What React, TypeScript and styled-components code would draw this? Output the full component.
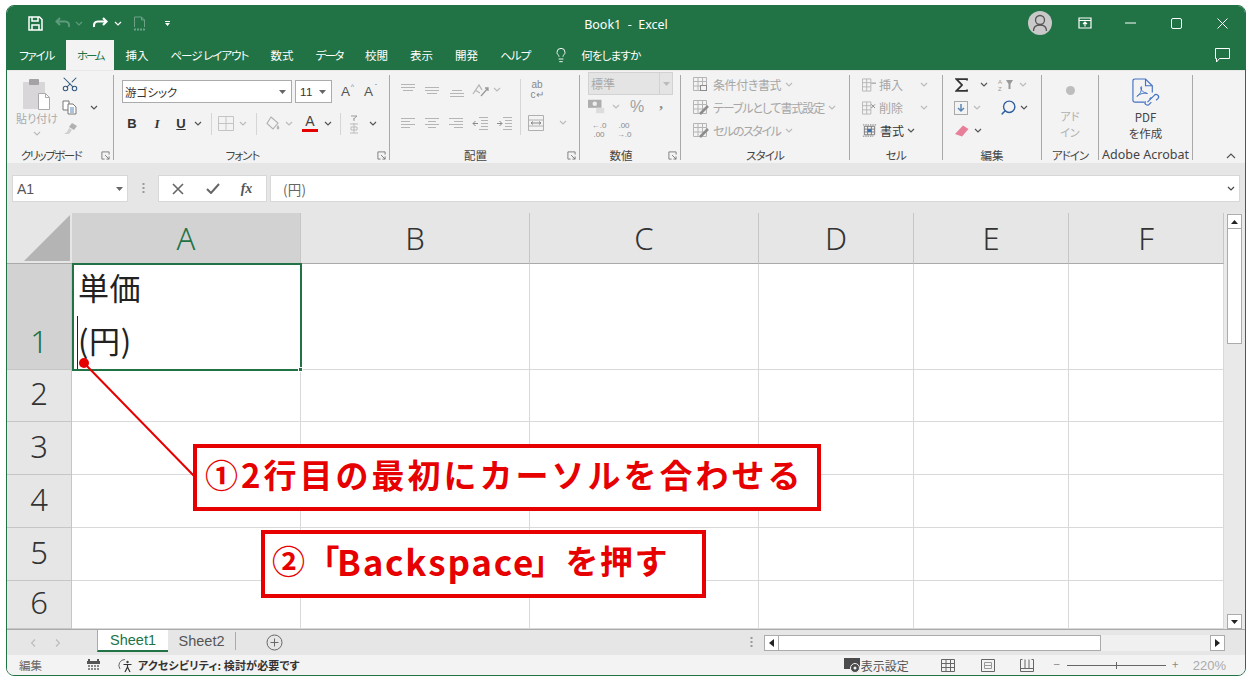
import React from "react";
import styled, { createGlobalStyle } from "styled-components";
import { Lightbulb, Scissors, Search } from "lucide-react";

const Global = createGlobalStyle`
  html, body { margin: 0; padding: 0; background: #fff; }
  body { font-family: "Noto Sans CJK JP", "Noto Sans", sans-serif; font-feature-settings: "palt"; }
  * { box-sizing: border-box; }
`;

const GREEN = "#217346";
const RED = "#e60000";

const Page = styled.div`position: relative; width: 1252px; height: 683px; padding: 5px 6px 0; overflow: hidden;`;
const Window = styled.div`width: 1240px; height: 671px; border: 1px solid ${GREEN}; border-radius: 8px; overflow: hidden; display: flex; flex-direction: column; background: #e6e6e6;`;

const TitleBar = styled.div`height: 34px; flex: none; background: ${GREEN}; display: flex; align-items: center; color: #fff;`;
const TitleSide = styled.div<{ $end?: boolean }>`flex: 1 1 0; display: flex; align-items: center; justify-content: ${(p) => (p.$end ? "flex-end" : "flex-start")};`;
const TitleText = styled.div`font-size: 12.5px; white-space: pre; font-family: "Noto Sans", sans-serif; margin-top: 2px;`;
const Slot = styled.span<{ $w: number }>`flex: none; width: ${(p) => p.$w}px; display: inline-flex; align-items: center; justify-content: center; line-height: 1;`;
const Avatar = styled.span`width: 24px; height: 24px; border-radius: 50%; background: #c9c9c9; display: flex; align-items: center; justify-content: center;`;

const TabsBar = styled.div`height: 30px; flex: none; background: ${GREEN}; display: flex; align-items: stretch; padding-right: 15px;`;
const Tab = styled.div<{ $active?: boolean; $pad?: number; $ls?: number }>`padding: 0 ${(p) => p.$pad ?? 11.05}px; display: flex; align-items: center; font-size: 11.5px; white-space: pre; letter-spacing: ${(p) => p.$ls ?? 0}px; color: ${(p) => (p.$active ? GREEN : "#fff")}; background: ${(p) => (p.$active ? "#f3f3f3" : "transparent")};`;
const TellMe = styled.div`display: flex; align-items: center; gap: 12px; padding-left: 12px; color: #fff; font-size: 11.5px; letter-spacing: -0.8px; flex: 1;`;

const Ribbon = styled.div`height: 93px; flex: none; background: #f3f3f3; display: flex; padding-top: 4px; border-top: 1px solid #e8e8e8;`;
const Group = styled.div<{ $w: number }>`position: relative; flex: none; width: ${(p) => p.$w}px; height: 85px; border-right: 1px solid #a9a9a9; display: flex; flex-direction: column;`;
const GroupBody = styled.div<{ $pl?: number; $pt?: number; $mt?: number }>`flex: 1; min-height: 0; margin-top: ${(p) => p.$mt ?? 0}px; padding: ${(p) => p.$pt ?? 0}px 0 0 ${(p) => p.$pl ?? 0}px;`;
const Footer = styled.div`height: 15px; flex: none; margin-bottom: -3px; display: flex; align-items: center; font-size: 11.5px; color: #444; line-height: 1;`;
const FooterLabel = styled.span<{ $ls?: number }>`flex: 1; text-align: center; white-space: nowrap; letter-spacing: ${(p) => p.$ls ?? 0}px;`;
const AcrobatLabel = styled(FooterLabel)`font-family: "Noto Sans", sans-serif; font-size: 12.5px;`;
const Launcher = styled.span`flex: none; width: 18px; display: flex; align-items: center; padding-left: 6px;`;
const Stack = styled.div<{ $gap?: number }>`display: flex; flex-direction: column; gap: ${(p) => p.$gap ?? 0}px;`;
const Row = styled.div<{ $h?: number; $ml?: number }>`display: flex; align-items: center; height: ${(p) => p.$h ?? 23}px; margin-left: ${(p) => p.$ml ?? 0}px;`;
const Split = styled.div`display: flex; align-items: flex-start;`;
const Divider = styled.span<{ $h: number; $ml?: number; $mt?: number }>`flex: none; width: 1px; height: ${(p) => p.$h}px; background: #d6d6d6; margin-left: ${(p) => p.$ml ?? 0}px; margin-top: ${(p) => p.$mt ?? 0}px;`;
const VDiv = styled.span`display: block; width: 1px; height: 22px; background: #d6d6d6;`;

const PasteCol = styled.div`flex: none; width: 42px; display: flex; flex-direction: column; align-items: center; padding-top: 3px; color: #aaa; font-size: 11px; svg { display: block; }`;
const PasteLabel = styled.span`line-height: 13px; white-space: nowrap; margin-top: 1px;`;
const ChevWrap = styled.span`margin-top: 6px; display: flex;`;
const ClipCol = styled.div`flex: none; width: 24px; display: flex; flex-direction: column; align-items: center; gap: 7px; svg { display: block; }`;
const ClipChevron = styled(Slot)`margin-top: 30px;`;
const CutIcon = styled(Scissors)`transform: rotate(-90deg);`;

const Select = styled.div<{ $w: number; $ml?: number }>`flex: none; width: ${(p) => p.$w}px; height: 23px; margin-left: ${(p) => p.$ml ?? 0}px; background: #fff; border: 1px solid #ababab; display: flex; align-items: center; justify-content: space-between; padding: 0 5px 0 2px; font-size: 11.5px; color: #333;`;
const SizeText = styled.span`font-family: "Liberation Sans", sans-serif; letter-spacing: .5px; padding-left: 2px;`;
const FormatBtn = styled.span<{ $s?: string; $u?: boolean }>`font-family: "Liberation Serif", serif; font-weight: 700; font-size: 13px; color: #333; font-style: ${(p) => p.$s ?? "normal"}; text-decoration: ${(p) => (p.$u ? "underline" : "none")};`;
const SansBtn = styled(FormatBtn)`font-family: "Liberation Sans", sans-serif;`;
const FontA = styled.span`display: flex; flex-direction: column; align-items: center; font-family: "Liberation Sans", sans-serif; font-size: 14px; color: #444; line-height: 13px;`;
const RedBar = styled.span`display: block; width: 16px; height: 3px; background: ${RED}; margin-top: 1px;`;
const GrowA = styled.span`font-family: "Liberation Sans", sans-serif; font-size: 13.5px; color: #555; position: relative; padding-right: 4px;`;
const Sup = styled.span`position: absolute; top: -2px; right: 0; font-size: 7px; color: #5b87b8;`;
const GrowSlot = styled(Slot)<{ $ml?: number }>`margin-left: ${(p) => p.$ml ?? 0}px;`;

const NumSelect = styled.div`width: 85px; height: 23px; margin: -3px 0 0 8px; background: #e4e4e4; border: 1px solid #d2d2d2; display: flex; color: #a9a9a9; font-size: 12px; align-items: center; padding-left: 2px;`;
const NumCaret = styled.span`margin-left: auto; width: 13px; height: 21px; border-left: 1px solid #d2d2d2; display: flex; align-items: center; justify-content: center;`;
const Pct = styled.span`font-size: 16px; color: #a0a0a0; font-family: "Liberation Sans", sans-serif;`;
const Comma = styled.span`font-size: 15px; font-weight: 700; color: #888; font-family: "Liberation Serif", serif; margin-top: -6px;`;
const DecText = styled.span`font-family: "Liberation Sans", sans-serif; font-size: 8px; color: #8a8a8a; line-height: 9px; text-align: center; white-space: pre;`;
const WrapText = styled.span`font-family: "Liberation Sans", sans-serif; font-size: 10px; line-height: 10px; color: #888; text-align: center; white-space: pre;`;

const ListRow = styled.div<{ $gap?: number }>`height: 23px; display: flex; align-items: center; gap: ${(p) => p.$gap ?? 4}px; font-size: 12px; color: #a6a6a6; white-space: nowrap;`;
const DarkRow = styled(ListRow)`color: #333;`;
const ListText = styled.span<{ $ls?: number }>`letter-spacing: ${(p) => p.$ls ?? 0}px;`;
const Center = styled.div`display: flex; flex-direction: column; align-items: center; font-size: 11px; line-height: 16px; text-align: center;`;
const Muted = styled(Center)`color: #b0b0b0;`;
const Strong = styled(Center)`color: #444; font-size: 11.5px; svg { display: block; margin-bottom: 1px; }`;
const Dot = styled.span`width: 9px; height: 9px; border-radius: 50%; background: #bdbdbd; margin: 11px 0 13px;`;
const RibbonEnd = styled.div`flex: 1; display: flex; align-items: flex-end; justify-content: flex-end; padding: 0 9px 4px 0;`;

const FormulaBand = styled.div`height: 50px; flex: none; background: #e6e6e6; padding: 12px 5px 11px 5px; display: flex; gap: 3px; align-items: stretch;`;
const Box = styled.div<{ $w?: number }>`background: #fff; border: 1px solid #d8d8d8; height: 27px; display: flex; align-items: center; ${(p) => (p.$w ? `width:${p.$w}px; flex:none;` : "flex:1;")}`;
const NameText = styled.span`font-family: "Liberation Sans", sans-serif; font-size: 14px; color: #555; padding-left: 4px; flex: 1;`;
const FormulaText = styled.span`font-size: 13.5px; color: #666; padding-left: 12px; flex: 1; letter-spacing: .2px; font-feature-settings: normal;`;
const Grip = styled.span`width: 24px; flex: none; display: flex; align-items: center; justify-content: center;`;
const Fx = styled.span`font-family: "Liberation Serif", serif; font-style: italic; font-size: 14px; color: #555; font-weight: 700;`;

const Sheet = styled.div`height: 416px; flex: none; display: flex; background: #fff;`;
const Grid = styled.div`flex: none; width: 1217px; display: grid; grid-template-columns: 65px 229px 229px 229px 155px 155px 155px; grid-template-rows: 51px 106px 52px 53px 53px 53px 48px; border-right: 1px solid #aaa;`;
const Corner = styled.div`background: #e6e6e6; border-bottom: 1px solid #aaa; display: flex; align-items: flex-end; justify-content: flex-end; padding: 0 2px 2px 0;`;
const ColHead = styled.div<{ $on?: boolean }>`background: ${(p) => (p.$on ? "#d2d2d2" : "#e6e6e6")}; color: ${(p) => (p.$on ? GREEN : "#333")}; border-right: 1px solid #c6c6c6; border-bottom: 1px solid #aaa; display: flex; align-items: center; justify-content: center; font-size: 31px; font-weight: 300; font-family: "Noto Sans", sans-serif;`;
const RowHead = styled.div<{ $on?: boolean }>`background: ${(p) => (p.$on ? "#d2d2d2" : "#e6e6e6")}; color: ${(p) => (p.$on ? GREEN : "#333")}; border-right: 1px solid #c6c6c6; border-bottom: 1px solid #c6c6c6; display: flex; align-items: center; justify-content: center; font-size: 31px; line-height: 1; font-weight: 300; font-family: "Noto Sans", sans-serif; overflow: hidden; padding: ${(p) => (p.$on ? 53 : 0)}px 0 4px;`;
const Cell = styled.div`background: #fff; border-right: 1px solid #d9d9d9; border-bottom: 1px solid #d9d9d9;`;
const ActiveCell = styled.div`position: relative; margin: -1px -1px -1px 0; border: 2px solid ${GREEN}; padding: 0 0 0 4px; background: #fff; font-size: 31px; line-height: 53px; color: #222; z-index: 1; font-feature-settings: normal;`;
const Handle = styled.span`position: absolute; right: -3px; bottom: -3px; width: 5px; height: 5px; background: ${GREEN}; border: 1px solid #fff;`;
const Caret = styled.span`position: absolute; left: 3px; bottom: 0; width: 1px; height: 53px; background: #222;`;
const CellLines = styled.div`margin-top: -5px;`;
const CellLine = styled.div`height: 53px; white-space: pre; letter-spacing: .6px;`;

const VScroll = styled.div`flex: 1; background: #e9e9e9; display: flex; flex-direction: column; padding: 1px 3px 0 3px;`;
const ScrollBtn = styled.div`flex: none; height: 15px; background: #fff; border: 1px solid #ababab; display: flex; align-items: center; justify-content: center;`;
const VThumb = styled.div`flex: none; height: 115px; background: #fff; border: 1px solid #ababab; border-top: 0;`;
const VSpace = styled.div`flex: 1;`;

const SheetBar = styled.div`height: 26px; flex: none; background: #e6e6e6; border-top: 1px solid #aaa; display: flex; align-items: stretch; font-size: 14.5px;`;
const NavArrows = styled.div`flex: none; width: 90px; display: flex; align-items: center; padding-left: 24px; gap: 19px;`;
const SheetTab = styled.div<{ $on?: boolean }>`flex: none; width: ${(p) => (p.$on ? 71 : 67)}px; height: 22px; display: flex; align-items: center; justify-content: center; font-family: "Liberation Sans", sans-serif; background: ${(p) => (p.$on ? "#fff" : "transparent")}; color: ${(p) => (p.$on ? GREEN : "#555")}; border-left: ${(p) => (p.$on ? "1px solid #aaa" : "0")}; border-bottom: ${(p) => (p.$on ? `2px solid ${GREEN}` : "0")};`;
const TabSep = styled.span`flex: none; width: 1px; height: 18px; background: #aaa; margin-top: 2px;`;
const AddSheet = styled.div`flex: none; margin-left: 30px; display: flex; align-items: center;`;
const HArea = styled.div`flex: 1; display: flex; justify-content: flex-end; align-items: center; padding-right: 20px;`;
const HScroll = styled.div`width: 461px; height: 16px; margin-left: 11px; display: flex; background: #f0f0f0;`;
const HBtn = styled.div`flex: none; width: 15px; background: #fff; border: 1px solid #ababab; display: flex; align-items: center; justify-content: center;`;
const HThumb = styled.div`flex: none; width: 322px; background: #fff; border: 1px solid #ababab; border-left: 0;`;
const HSpace = styled.div`flex: 1;`;

const StatusBar = styled.div`height: 20px; flex: none; background: #f3f3f3; display: flex; align-items: center; font-size: 11.5px; color: #666;`;
const StatusLeft = styled.div`flex: 1; display: flex; align-items: center; padding-left: 12px;`;
const StatusStrong = styled.span`color: #333; font-weight: 700; font-size: 11px; letter-spacing: .15px; white-space: nowrap; margin-left: 3px;`;
const StatusText = styled.span`color: #555; font-size: 12px; white-space: nowrap;`;
const CalSlot = styled(Slot)`padding-left: 28px;`;
const ViewSlot = styled(Slot)`padding-left: 19px;`;
const ZoomSign = styled(Slot)`color: #888;`;
const ZoomPct = styled.span`font-family: "Liberation Sans", sans-serif; color: #aaa; font-size: 13px; margin: 0 19px 0 8px;`;
const SliderTrack = styled.span`position: relative; display: block; width: 99px; height: 1px; background: #666;`;
const SliderTick = styled.span`position: absolute; left: 49px; top: -3px; width: 1px; height: 7px; background: #666;`;

const Callout = styled.div<{ $x: number; $y: number; $w: number; $h: number; $fs: number; $ls: number; $pl: number; $pb: number }>`
  position: absolute; left: ${(p) => p.$x}px; top: ${(p) => p.$y}px; width: ${(p) => p.$w}px; height: ${(p) => p.$h}px;
  border: 4px solid ${RED}; background: #fff; color: ${RED}; font-weight: 700; font-size: ${(p) => p.$fs}px;
  letter-spacing: ${(p) => p.$ls}px; padding: 0 0 ${(p) => p.$pb}px ${(p) => p.$pl}px; display: flex; align-items: center; white-space: pre; z-index: 3;
  font-feature-settings: normal;
`;
const Latin = styled.span`font-size: 35px; letter-spacing: 1.8px; margin: 0 -4px;`;
const Pointer = styled.svg`position: absolute; left: 0; top: 0; z-index: 2;`;

const Chev = ({ c = "#555" }: { c?: string }) => (
  <svg width="8" height="5" viewBox="0 0 8 5" fill="none"><path d="M1 1l3 3 3-3" stroke={c} strokeWidth="1.2" /></svg>
);
const Tri = ({ c = "#666", up }: { c?: string; up?: boolean }) => (
  <svg width="7" height="4" viewBox="0 0 7 4"><path d={up ? "M0 4h7L3.5 0z" : "M0 0h7L3.5 4z"} fill={c} /></svg>
);
const Launch = () => (
  <svg width="9" height="9" viewBox="0 0 10 10" fill="none" stroke="#777" strokeWidth="1"><path d="M9 4V1H1v8h3" /><path d="M4.5 4.5L9 9M9 6v3H6" /></svg>
);
const Lines = ({ d, c = "#b5b5b5" }: { d: number[][]; c?: string }) => (
  <svg width="16" height="14" viewBox="0 0 16 14" stroke={c} strokeWidth="1" fill="none">
    {d.map((l, i) => <path key={i} d={`M${l[1]} ${l[0] + 0.5}H${l[2]}`} />)}
  </svg>
);
const ICON_TOP = [[1, 1, 15], [4, 1, 15], [7, 3, 13]];
const ICON_MID = [[4, 1, 15], [7, 1, 15], [10, 3, 13]];
const ICON_BOT = [[7, 3, 13], [10, 1, 15], [13, 1, 15]];
const ICON_L = [[2, 1, 15], [5, 1, 10], [8, 1, 15], [11, 1, 10]];
const ICON_C = [[2, 1, 15], [5, 4, 12], [8, 1, 15], [11, 4, 12]];
const ICON_R = [[2, 1, 15], [5, 6, 15], [8, 1, 15], [11, 6, 15]];

const SaveIcon = () => (
  <svg width="15" height="15" viewBox="0 0 15 15" fill="none" stroke="#fff" strokeWidth="1.5"><path d="M1 1h10.5L14 3.5V14H1z" /><path d="M4 1v4h6V1M4 14V9h7v5" /></svg>
);
const UndoIcon = ({ c }: { c: string }) => (
  <svg width="16" height="12" viewBox="0 0 16 12" fill="none" stroke={c} strokeWidth="2"><path d="M5 1L1.5 4.5 5 8" /><path d="M2 4.5h8c3 0 4.5 2 4 5.5" /></svg>
);
const RedoIcon = () => (
  <svg width="16" height="12" viewBox="0 0 16 12" fill="none" stroke="#fff" strokeWidth="2.2"><path d="M11 1l3.5 3.5L11 8" /><path d="M14 4.5H6C3 4.5 1.5 6.5 2 10" /></svg>
);
const DocIcon = () => (
  <svg width="13" height="15" viewBox="0 0 13 15" fill="none" stroke="#6ea287" strokeWidth="1"><path d="M1.5 11V1h7l3 3v7M8.500 1v3h3" /><path d="M1 13.500h11" strokeDasharray="2 1" strokeWidth="2" /></svg>
);
const CustomizeIcon = () => (
  <svg width="7" height="7" viewBox="0 0 7 7"><path d="M1 1h5v1H1z M1 3h5L3.500 6z" fill="#fff" /></svg>
);
const PersonIcon = () => (
  <svg width="18" height="18" viewBox="0 0 18 18" fill="none" stroke="#555" strokeWidth="1.3"><circle cx="9" cy="6" r="4.500" /><path d="M2.500 17c0-4 2.500-6 6.500-6s6.500 2 6.500 6" /></svg>
);
const RibbonOpt = () => (
  <svg width="14" height="12" viewBox="0 0 14 12" fill="none" stroke="#fff" strokeWidth="1.200"><path d="M1 1h12v10H1zM1 3.500h12" /><path d="M7 9.500V5M5 7l2-2 2 2" /></svg>
);
const WinMin = () => <svg width="11" height="2" viewBox="0 0 11 2"><path d="M0 1h11" stroke="#fff" /></svg>;
const WinMax = () => <svg width="11" height="11" viewBox="0 0 11 11" fill="none" stroke="#fff"><rect x=".5" y=".5" width="10" height="10" rx="1.500" /></svg>;
const WinClose = () => <svg width="11" height="11" viewBox="0 0 11 11" stroke="#fff"><path d="M.5.500l10 10M10.500.500l-10 10" /></svg>;
const CommentIcon = () => (
  <svg width="15" height="15" viewBox="0 0 15 15" fill="none" stroke="#fff"><path d="M.500.500h14v10H4.500L1.500 14v-3.500h-1z" /></svg>
);
const PasteIcon = () => (
  <svg width="28" height="33" viewBox="0 0 28 33"><rect x="0" y="4" width="22" height="27" rx="1" fill="#d9d6d9" /><rect x="6" y="1" width="10" height="6" rx="1" fill="#a5a2a5" /><path d="M15.500 15.500h7l4 4v12h-11z" fill="#fff" stroke="#aaa" /><path d="M22.500 15.500v4h4" fill="none" stroke="#aaa" /></svg>
);
const CopyIcon = () => (
  <svg width="16" height="15" viewBox="0 0 16 15" fill="none" stroke="#777"><path d="M1 1h6v9H1z" fill="#fff" /><path d="M6 4h5l3 3v7H6z" fill="#fff" /><path d="M8 8h4M8 10h4M8 12h4" stroke="#5b87b8" /></svg>
);
const BrushIcon = () => (
  <svg width="15" height="13" viewBox="0 0 15 13"><path d="M9 1l5 3-3 4-5-3z" fill="#b0b0b0" /><path d="M6 6l3 2-3 4-5 0 3-2z" fill="#d0d0d0" /></svg>
);
const BorderIcon = () => (
  <svg width="16" height="15" viewBox="0 0 16 15" fill="none" stroke="#c4c4c4"><path d="M.500.500h15v14H.500zM8 .500v14M.500 7.500h15" /></svg>
);
const FillIcon = () => (
  <svg width="15" height="15" viewBox="0 0 15 15" fill="none" stroke="#b0b0b0" strokeWidth="1.100"><path d="M6 1l7 6-5 6-6-5.500z" /><path d="M13 10c1 1.500 1 3 0 3s-1-1.500 0-3z" /></svg>
);
const RubyIcon = () => (
  <svg width="10" height="20" viewBox="0 0 10 20" fill="none" stroke="#999"><path d="M2 2h6L4.500 5M5 4v3" /><path d="M1 10h8M5 9v10M2 13h6v3H2zM1 19h8" stroke="#bbb" /></svg>
);
const OrientIcon = () => (
  <svg width="20" height="16" viewBox="0 0 20 16" fill="none" stroke="#b5b5b5" strokeWidth="1.300"><path d="M3 12L9 3l3 5M5 8l5 3" /><path d="M11 14L18 6M15 6h3v3" stroke="#999" /></svg>
);
const IndentIcon = ({ rev }: { rev?: boolean }) => (
  <svg width="17" height="14" viewBox="0 0 17 14" fill="none" stroke="#b5b5b5">
    <path d="M7 1.500h9M9 4.500h7M9 7.500h7M9 10.500h7M7 13.500h9" />
    <path d={rev ? "M6 7.500H1M3.500 5l-2.500 2.500L3.500 10" : "M1 7.500h5M3.500 5L6 7.500 3.500 10"} stroke="#8a8a8a" />
  </svg>
);
const MergeIcon = () => (
  <svg width="16" height="16" viewBox="0 0 16 16" fill="none" stroke="#b0b0b0"><path d="M.500.500h15v15H.500zM.500 5h15M.500 11h15" /><path d="M3 8h10M5 6.500L3 8l2 1.500M11 6.500L13 8l-2 1.500" stroke="#888" /></svg>
);
const CurrencyIcon = () => (
  <svg width="20" height="17" viewBox="0 0 20 17"><rect x="0" y="1" width="15" height="9" fill="#aeaeae" /><circle cx="7.500" cy="5.500" r="2.500" fill="#eee" /><path d="M9 10h9v6H9z" fill="#ddd" /></svg>
);
const StyleIcon = ({ pen }: { pen?: boolean }) => (
  <svg width="16" height="16" viewBox="0 0 16 16" fill="none" stroke="#b5b5b5">
    <path d="M.500.500h13v13H.500zM.500 4.500h13M.500 9h13M5 .500v13M9.500 .500v13" />
    {pen ? <path d="M15 6l-8 8" stroke="#8c8c8c" strokeWidth="2.500" /> : <rect x="7.500" y="8.500" width="6" height="5" fill="#f3f3f3" stroke="#8c8c8c" />}
  </svg>
);
const CellInsIcon = ({ x }: { x?: boolean }) => (
  <svg width="15" height="14" viewBox="0 0 15 14" fill="none" stroke="#b5b5b5"><path d="M.500.500h9v13h-9zM.500 4.500h9M.500 9h9M5 .500v13" /><path d={x ? "M10 3l4 4M14 3l-4 4" : "M10 5h5"} stroke="#888" /></svg>
);
const FormatIcon = () => (
  <svg width="15" height="16" viewBox="0 0 16 16" fill="none" stroke="#777"><path d="M1 1.500h14M1 13.500h11" strokeDasharray="1.500 1" /><path d="M2.500 3h11v9h-11zM2.500 6h11M2.500 9h11M6 3v9M10 3v9" /><rect x="6" y="6" width="4" height="3" fill="#3d6fb0" stroke="none" /></svg>
);
const Sigma = () => (
  <svg width="13" height="14" viewBox="0 0 13 14" fill="none" stroke="#333" strokeWidth="1.800"><path d="M12 2.500V1.200H1.500L7 7l-5.500 5.800H12v-1.300" /></svg>
);
const SortIcon = () => (
  <svg width="16" height="14" viewBox="0 0 16 14"><path d="M8 2h7l-2.500 4v5h-2V6z" fill="#999" /><text x="0" y="6" fontSize="6" fill="#999" fontFamily="Liberation Sans">A</text><text x="0" y="13" fontSize="6" fill="#999" fontFamily="Liberation Sans">Z</text></svg>
);
const FillDown = () => (
  <svg width="14" height="14" viewBox="0 0 14 14" fill="none" stroke="#aaa"><rect x=".5" y=".5" width="13" height="13" /><path d="M7 3v7M4 7l3 3 3-3" stroke="#5b87b8" strokeWidth="1.500" /></svg>
);
const Eraser = () => (
  <svg width="15" height="12" viewBox="0 0 15 12"><path d="M9 .500L14.500 4 8 11.500 1 9z" fill="#e77f99" /></svg>
);
const FindIcon = styled(Search)`transform: scaleX(-1);`;
const AcrobatIcon = () => (
  <svg width="30" height="30" viewBox="0 0 31 31" fill="none" stroke="#4472c4" strokeWidth="1.200">
    <path d="M14 25H4a2 2 0 0 1-2-2V3a2 2 0 0 1 2-2h11l7 7v7" /><path d="M15 1v7h7" />
    <path d="M6 19c3-1 5-6 5-9 0-2-1-1-1 0 0 3 3 5 7 6-3-1-8 0-11 3z" strokeWidth="1" />
    <path d="M17 25l7-7a2.500 2.500 0 0 1 4 3l-2 2M21 20l-2 2M15 24a2.500 2.500 0 0 0 4 3l2-2" />
  </svg>
);
const Gripper = () => (
  <svg width="3" height="11" viewBox="0 0 3 11" fill="#999"><rect width="2" height="2" x=".5" /><rect width="2" height="2" x=".5" y="4" /><rect width="2" height="2" x=".5" y="8" /></svg>
);
const XMark = () => <svg width="12" height="12" viewBox="0 0 12 12" stroke="#666" strokeWidth="1.600"><path d="M1 1l10 10M11 1L1 11" /></svg>;
const CheckMark = () => <svg width="14" height="11" viewBox="0 0 14 11" fill="none" stroke="#666" strokeWidth="2"><path d="M1 6l4 4 8-9" /></svg>;
const SmallArrow = ({ dir, c = "#bbb" }: { dir: "l" | "r"; c?: string }) => (
  <svg width="5" height="8" viewBox="0 0 5 8" fill="none" stroke={c} strokeWidth="1.200"><path d={dir === "l" ? "M4 .500L.500 4 4 7.500" : "M1 .500L4.500 4 1 7.500"} /></svg>
);
const SolidArrow = ({ dir }: { dir: "l" | "r" }) => (
  <svg width="5" height="8" viewBox="0 0 5 8"><path d={dir === "l" ? "M5 0v8L0 4z" : "M0 0v8l5-4z"} fill="#222" /></svg>
);
const PlusCircle = () => (
  <svg width="17" height="17" viewBox="0 0 17 17" fill="none" stroke="#666"><circle cx="8.500" cy="8.500" r="7.500" /><path d="M8.500 4.500v8M4.500 8.500h8" /></svg>
);
const CalIcon = () => (
  <svg width="13" height="13" viewBox="0 0 13 13"><rect y="2" width="13" height="3" fill="#555" /><rect x="1" y="0" width="2" height="3" fill="#555" /><rect x="10" y="0" width="2" height="3" fill="#555" /><path d="M1 6h2v2H1zM4 6h2v2H4zM7 6h2v2H7zM10 6h2v2h-2zM1 9h2v2H1zM4 9h2v2H4zM7 9h2v2H7zM10 9h2v2h-2z" fill="#888" /></svg>
);
const A11yIcon = () => (
  <svg width="17" height="15" viewBox="0 0 17 15" fill="none" stroke="#666"><path d="M8 1.500A6 6 0 0 0 3 11" /><circle cx="10.500" cy="4" r="1.200" fill="#444" stroke="none" /><path d="M6.500 6.500h8M10.500 6v3M8 14l2.500-5 2.500 5" stroke="#333" strokeWidth="1.200" /></svg>
);
const DisplayIcon = () => (
  <svg width="17" height="15" viewBox="0 0 17 15"><rect width="16" height="11" fill="#4b4b4b" /><circle cx="11" cy="10" r="4.500" fill="#4b4b4b" stroke="#f3f3f3" /><circle cx="11" cy="10" r="1.500" fill="#f3f3f3" /></svg>
);
const ViewNormal = () => <svg width="14" height="13" viewBox="0 0 14 13" fill="none" stroke="#666"><path d="M.500.500h13v12H.500zM.500 4.500h13M.500 8.500h13M5 .500v12M9.500 .500v12" /></svg>;
const ViewPage = () => <svg width="14" height="13" viewBox="0 0 14 13" fill="none" stroke="#666"><path d="M.500.500h13v12H.500z" /><path d="M3.500 3.500h7v6h-7zM3.500 6.500h7" stroke="#999" /></svg>;
const ViewBreak = () => <svg width="14" height="13" viewBox="0 0 14 13" fill="none" stroke="#666"><path d="M.500.500v12h13V.500M.500 9.500h13M5 .500v9M9 .500v9M.500.500h2M11.500.500h2" /></svg>;

const COLUMNS = ["A", "B", "C", "D", "E", "F"];
const ROWS = [2, 3, 4, 5, 6];
const CornerMark = () => (
  <svg width="46" height="46" viewBox="0 0 46 46"><path d="M46 0v46H0z" fill="#b4b4b4" /></svg>
);

export default function App() {
  return (
    <Page>
      <Global />
      <Window>
        <TitleBar>
          <TitleSide>
            <Slot $w={19} />
            <Slot $w={18}><SaveIcon /></Slot>
            <Slot $w={10} />
            <Slot $w={18}><UndoIcon c="#5e9a7c" /></Slot>
            <Slot $w={14}><Chev c="#5e9a7c" /></Slot>
            <Slot $w={28}><RedoIcon /></Slot>
            <Slot $w={8}><Chev c="#fff" /></Slot>
            <Slot $w={34}><DocIcon /></Slot>
            <Slot $w={22}><CustomizeIcon /></Slot>
          </TitleSide>
          <TitleText>Book1  -  Excel</TitleText>
          <TitleSide $end>
            <Slot $w={44}><Avatar><PersonIcon /></Avatar></Slot>
            <Slot $w={46}><RibbonOpt /></Slot>
            <Slot $w={45}><WinMin /></Slot>
            <Slot $w={46}><WinMax /></Slot>
            <Slot $w={46}><WinClose /></Slot>
          </TitleSide>
        </TitleBar>

        <TabsBar>
          <Tab $pad={12} $ls={-1.2}>ファイル</Tab>
          <Tab $active $pad={11} $ls={-2.2}>ホーム</Tab>
          <Tab>挿入</Tab>
          <Tab $ls={-1}>ページ レイアウト</Tab>
          <Tab>数式</Tab>
          <Tab $ls={-1.6}>データ</Tab>
          <Tab>校閲</Tab>
          <Tab>表示</Tab>
          <Tab>開発</Tab>
          <Tab $ls={-1}>ヘルプ</Tab>
          <TellMe>
            <Lightbulb size={16} strokeWidth={1.4} color="#fff" />
            <span>何をしますか</span>
          </TellMe>
          <Slot $w={16}><CommentIcon /></Slot>
        </TabsBar>

        <Ribbon>
          <Group $w={107}>
            <GroupBody $pl={9}>
              <Split>
                <PasteCol>
                  <PasteIcon />
                  <PasteLabel>貼り付け</PasteLabel>
                  <ChevWrap><Chev c="#bbb" /></ChevWrap>
                </PasteCol>
                <ClipCol>
                  <CutIcon size={18} color="#34597f" strokeWidth={1.4} />
                  <CopyIcon />
                  <BrushIcon />
                </ClipCol>
                <ClipChevron $w={24}><Chev /></ClipChevron>
              </Split>
            </GroupBody>
            <Footer><FooterLabel $ls={-1.5}>クリップボード</FooterLabel><Launcher><Launch /></Launcher></Footer>
          </Group>

          <Group $w={276}>
            <GroupBody $pl={8} $pt={5}>
              <Stack $gap={9}>
                <Row>
                  <Select $w={170}><span>游ゴシック</span><Tri /></Select>
                  <Select $w={37} $ml={3}><SizeText>11</SizeText><Tri /></Select>
                  <GrowSlot $w={23} $ml={4}><GrowA>A<Sup>^</Sup></GrowA></GrowSlot>
                  <Slot $w={23}><GrowA>A<Sup>ˇ</Sup></GrowA></Slot>
                </Row>
                <Row>
                  <Slot $w={20}><SansBtn>B</SansBtn></Slot>
                  <Slot $w={30}><FormatBtn $s="italic">I</FormatBtn></Slot>
                  <Slot $w={18}><SansBtn $u>U</SansBtn></Slot>
                  <Slot $w={16}><Chev /></Slot>
                  <Slot $w={10}><VDiv /></Slot>
                  <Slot $w={20}><BorderIcon /></Slot>
                  <Slot $w={14}><Chev c="#bbb" /></Slot>
                  <Slot $w={12}><VDiv /></Slot>
                  <Slot $w={20}><FillIcon /></Slot>
                  <Slot $w={14}><Chev c="#bbb" /></Slot>
                  <Slot $w={28}><FontA>A<RedBar /></FontA></Slot>
                  <Slot $w={8}><Chev /></Slot>
                  <Slot $w={16}><VDiv /></Slot>
                  <Slot $w={12}><RubyIcon /></Slot>
                  <Slot $w={26}><Chev /></Slot>
                </Row>
              </Stack>
            </GroupBody>
            <Footer><FooterLabel $ls={-1}>フォント</FooterLabel><Launcher><Launch /></Launcher></Footer>
          </Group>

          <Group $w={190}>
            <GroupBody $pl={6} $pt={3}>
              <Split>
                <Stack $gap={10}>
                  <Row>
                    <Slot $w={24}><Lines d={ICON_TOP} /></Slot>
                    <Slot $w={24}><Lines d={ICON_MID} /></Slot>
                    <Slot $w={26}><Lines d={ICON_BOT} /></Slot>
                    <Slot $w={20}><OrientIcon /></Slot>
                    <Slot $w={14}><Chev c="#bbb" /></Slot>
                  </Row>
                  <Row>
                    <Slot $w={24}><Lines d={ICON_L} /></Slot>
                    <Slot $w={24}><Lines d={ICON_C} /></Slot>
                    <Slot $w={24}><Lines d={ICON_R} /></Slot>
                    <Slot $w={24}><IndentIcon rev /></Slot>
                    <Slot $w={24}><IndentIcon /></Slot>
                  </Row>
                </Stack>
                <Divider $h={56} $ml={4} $mt={1} />
                <Stack $gap={10}>
                  <Row><Slot $w={32}><WrapText>{"ab\nc↵"}</WrapText></Slot></Row>
                  <Row>
                    <Slot $w={30}><MergeIcon /></Slot>
                    <Slot $w={24}><Chev c="#bbb" /></Slot>
                  </Row>
                </Stack>
              </Split>
            </GroupBody>
            <Footer><FooterLabel>配置</FooterLabel><Launcher><Launch /></Launcher></Footer>
          </Group>

          <Group $w={101}>
            <GroupBody>
              <NumSelect>標準<NumCaret><Tri c="#bbb" /></NumCaret></NumSelect>
              <Row $ml={8}>
                <Slot $w={18}><CurrencyIcon /></Slot>
                <Slot $w={20}><Chev c="#bbb" /></Slot>
                <Slot $w={22}><Pct>%</Pct></Slot>
                <Slot $w={26}><Comma>,</Comma></Slot>
              </Row>
              <Row $ml={8}>
                <Slot $w={22}><DecText>{"←.0\n.00"}</DecText></Slot>
                <Slot $w={28}><DecText>{".00\n→.0"}</DecText></Slot>
              </Row>
            </GroupBody>
            <Footer><FooterLabel>数値</FooterLabel><Launcher><Launch /></Launcher></Footer>
          </Group>

          <Group $w={169}>
            <GroupBody $pl={12} $mt={-2}>
              <Stack>
                <ListRow><StyleIcon /><ListText $ls={-0.4}>条件付き書式</ListText><Chev c="#bbb" /></ListRow>
                <ListRow><StyleIcon pen /><ListText $ls={-1.1}>テーブルとして書式設定</ListText><Chev c="#bbb" /></ListRow>
                <ListRow><StyleIcon pen /><ListText $ls={-1.4}>セルのスタイル</ListText><Chev c="#bbb" /></ListRow>
              </Stack>
            </GroupBody>
            <Footer><FooterLabel $ls={-0.8}>スタイル</FooterLabel></Footer>
          </Group>

          <Group $w={93}>
            <GroupBody $pl={12} $mt={-2}>
              <Stack>
                <ListRow $gap={3}><CellInsIcon /><ListText>挿入</ListText><Slot $w={36}><Chev c="#bbb" /></Slot></ListRow>
                <ListRow $gap={3}><CellInsIcon x /><ListText>削除</ListText><Slot $w={36}><Chev c="#bbb" /></Slot></ListRow>
                <DarkRow $gap={3}><FormatIcon /><ListText>書式</ListText><Chev /></DarkRow>
              </Stack>
            </GroupBody>
            <Footer><FooterLabel $ls={-0.5}>セル</FooterLabel></Footer>
          </Group>

          <Group $w={99}>
            <GroupBody $pl={6} $mt={-2}>
              <Stack>
                <Row>
                  <Slot $w={24}><Sigma /></Slot>
                  <Slot $w={22}><Chev /></Slot>
                  <Slot $w={22}><SortIcon /></Slot>
                  <Slot $w={12}><Chev c="#bbb" /></Slot>
                </Row>
                <Row>
                  <Slot $w={24}><FillDown /></Slot>
                  <Slot $w={8}><Chev c="#bbb" /></Slot>
                  <Slot $w={15} />
                  <Slot $w={24}><FindIcon size={17} color="#2f5f9f" strokeWidth={2} /></Slot>
                  <Slot $w={8}><Chev /></Slot>
                </Row>
                <Row>
                  <Slot $w={24}><Eraser /></Slot>
                  <Slot $w={10}><Chev /></Slot>
                </Row>
              </Stack>
            </GroupBody>
            <Footer><FooterLabel>編集</FooterLabel></Footer>
          </Group>

          <Group $w={57}>
            <GroupBody>
              <Muted><Dot /><span>アド</span><span>イン</span></Muted>
            </GroupBody>
            <Footer><FooterLabel $ls={-1}>アドイン</FooterLabel></Footer>
          </Group>

          <Group $w={94}>
            <GroupBody $pt={3}>
              <Strong><AcrobatIcon /><span>PDF</span><span>を作成</span></Strong>
            </GroupBody>
            <Footer><AcrobatLabel>Adobe Acrobat</AcrobatLabel></Footer>
          </Group>

          <RibbonEnd>
            <svg width="10" height="6" viewBox="0 0 10 6" fill="none" stroke="#555" strokeWidth="1.200"><path d="M1 5l4-4 4 4" /></svg>
          </RibbonEnd>
        </Ribbon>

        <FormulaBand>
          <Box $w={116}><NameText>A1</NameText><Slot $w={16}><Tri /></Slot></Box>
          <Grip><Gripper /></Grip>
          <Box $w={109}>
            <Slot $w={37}><XMark /></Slot>
            <Slot $w={33}><CheckMark /></Slot>
            <Slot $w={35}><Fx>fx</Fx></Slot>
          </Box>
          <Box>
            <FormulaText>(円)</FormulaText>
            <Slot $w={16}><Chev c="#444" /></Slot>
          </Box>
        </FormulaBand>

        <Sheet>
          <Grid>
            <Corner><CornerMark /></Corner>
            {COLUMNS.map((c, i) => <ColHead key={c} $on={i === 0}>{c}</ColHead>)}
            <RowHead $on>1</RowHead>
            <ActiveCell>
              <CellLines>
                <CellLine>単価</CellLine>
                <CellLine>(円)</CellLine>
              </CellLines>
              <Caret />
              <Handle />
            </ActiveCell>
            {COLUMNS.slice(1).map((c) => <Cell key={c} />)}
            {ROWS.map((r) => (
              <React.Fragment key={r}>
                <RowHead>{r}</RowHead>
                {COLUMNS.map((c) => <Cell key={c} />)}
              </React.Fragment>
            ))}
          </Grid>
          <VScroll>
            <ScrollBtn><Tri c="#222" up /></ScrollBtn>
            <VThumb />
            <VSpace />
            <ScrollBtn><Tri c="#222" /></ScrollBtn>
          </VScroll>
        </Sheet>

        <SheetBar>
          <NavArrows><SmallArrow dir="l" /><SmallArrow dir="r" /></NavArrows>
          <SheetTab $on>Sheet1</SheetTab>
          <SheetTab>Sheet2</SheetTab>
          <TabSep />
          <AddSheet><PlusCircle /></AddSheet>
          <HArea>
            <Gripper />
            <HScroll>
              <HBtn><SolidArrow dir="l" /></HBtn>
              <HThumb />
              <HSpace />
              <HBtn><SolidArrow dir="r" /></HBtn>
            </HScroll>
          </HArea>
        </SheetBar>

        <StatusBar>
          <StatusLeft>
            <span>編集</span>
            <CalSlot $w={74}><CalIcon /></CalSlot>
            <Slot $w={19}><A11yIcon /></Slot>
            <StatusStrong>アクセシビリティ: 検討が必要です</StatusStrong>
          </StatusLeft>
          <DisplayIcon />
          <StatusText>表示設定</StatusText>
          <ViewSlot $w={59}><ViewNormal /></ViewSlot>
          <Slot $w={40}><ViewPage /></Slot>
          <Slot $w={39}><ViewBreak /></Slot>
          <ZoomSign $w={20}>−</ZoomSign>
          <SliderTrack><SliderTick /></SliderTrack>
          <ZoomSign $w={19}>+</ZoomSign>
          <ZoomPct>220%</ZoomPct>
        </StatusBar>
      </Window>

      <Pointer width="1252" height="683" viewBox="0 0 1252 683">
        <path d="M84 363L196 478" stroke={RED} strokeWidth="2" fill="none" />
        <circle cx="84" cy="363" r="5" fill={RED} />
      </Pointer>
      <Callout $x={193} $y={444} $w={628} $h={67} $fs={33} $ls={3} $pl={8} $pb={8}>①2行目の最初にカーソルを合わせる</Callout>
      <Callout $x={261} $y={530} $w={445} $h={68} $fs={33} $ls={1.5} $pl={7} $pb={8}>②「<Latin>Backspace</Latin>」を押す</Callout>
    </Page>
  );
}
